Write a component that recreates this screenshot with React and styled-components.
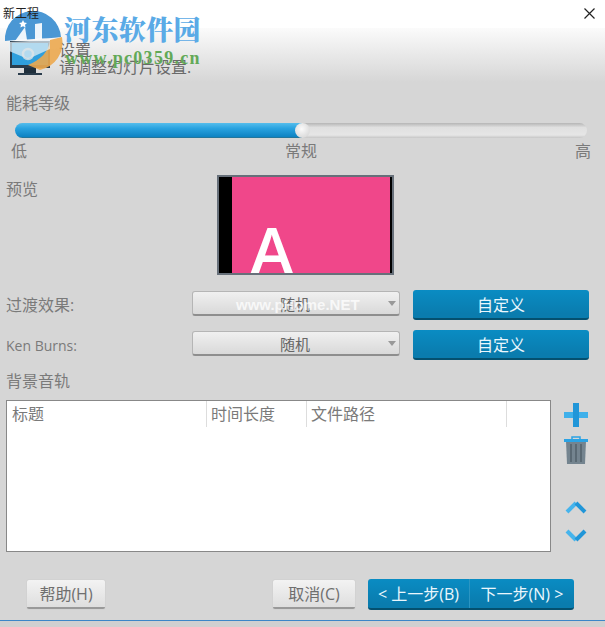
import React from 'react';
import styled, { createGlobalStyle } from 'styled-components';

const GlobalStyle = createGlobalStyle`
  html, body {
    margin: 0;
    padding: 0;
    background: #d6d6d6;
  }
  body {
    font-family: "Open Sans", "Noto Sans CJK SC", sans-serif;
    color: #757575;
  }
  * {
    box-sizing: border-box;
  }
`;

const Window = styled.div`
  position: relative;
  width: 605px;
  height: 627px;
  overflow: hidden;
  background: #d6d6d6;
  display: flex;
  flex-direction: column;
`;
const TitleBar = styled.div`
  height: 28px;
  flex: none;
  background: #fff;
  display: flex;
  justify-content: space-between;
  padding: 5px 10px 0 3px;
  font-size: 12px;
  line-height: 17px;
  color: #222;
`;
const WindowTitle = styled.span`
  position: relative;
  z-index: 2;
`;
const Header = styled.div`
  height: 54px;
  flex: none;
  background: linear-gradient(#fbfbfb, #d6d6d6);
  display: flex;
  padding: 14px 0 0 10px;
  gap: 9px;
`;
const HeaderText = styled.div`
  font-size: 16px;
  line-height: 17px;
  color: #6a6a6a;
`;
const Body = styled.div`
  flex: 1;
  display: flex;
  flex-direction: column;
  padding: 0 6px;
`;
const SectionLabel = styled.div`
  font-size: 16px;
  line-height: 22px;
  height: 22px;
  color: #7a7a7a;
`;
const EnergyLabel = styled(SectionLabel)`
  margin-top: 10px;
`;
const SliderTrack = styled.div`
  position: relative;
  margin: 9px 12px 0 9px;
  height: 15px;
  border-radius: 8px;
  background: linear-gradient(#b5b5b5, #e0e0e0 30%, #e6e6e6 80%, #c6c6c6);
`;
const SliderFill = styled.div`
  height: 100%;
  border-radius: 8px 0 0 8px;
  background: linear-gradient(#55bdec, #2aa3e0 35%, #0f84c4 90%, #2f6f86);
`;
const SliderThumb = styled.div`
  position: absolute;
  top: 0;
  width: 15px;
  height: 15px;
  margin-left: -7px;
  border-radius: 50%;
  background: radial-gradient(circle at 45% 40%, #fafafa, #dcdcdc 70%, #a0a0a0);
`;
const SliderTicks = styled.div`
  display: flex;
  justify-content: space-between;
  padding: 0 8px 0 5px;
  height: 22px;
  margin-top: 2px;
  font-size: 16px;
  line-height: 22px;
  color: #7a7a7a;
`;
const PreviewRow = styled.div`
  display: grid;
  grid-template-columns: 211px 177px;
  height: 102px;
  margin-top: 13px;
`;
const PreviewLabel = styled(SectionLabel)`
  margin-top: 3px;
`;
const PreviewFrame = styled.div`
  height: 100px;
  border: 2px solid #67707a;
  background: #f0478a;
  display: flex;
  justify-content: space-between;
  overflow: hidden;
`;
const BlackBar = styled.div`
  width: ${(props) => props.$w}px;
  background: #000;
  flex: none;
`;
const SlideLetter = styled.div`
  font-family: "Open Sans", "Liberation Sans", sans-serif;
  font-weight: 600;
  font-size: 66px;
  line-height: 66px;
  color: #fff;
  margin: 39px 0 0 18px;
  flex: 1;
`;
const OptionRow = styled.div`
  display: grid;
  grid-template-columns: 186px 208px 189px;
  height: 30px;
  margin-top: ${(props) => props.$top}px;
`;
const OptionLabel = styled.div`
  font-size: ${(props) => props.$size}px;
  color: #7a7a7a;
  line-height: 31px;
`;
const Select = styled.div`
  position: relative;
  height: 25px;
  margin-top: 1px;
  border-radius: 3px;
  border: 1px solid #b5b5b5;
  border-bottom: 2px solid #8e8e8e;
  background: linear-gradient(#f0f0f0, #d9d9d9);
  font-size: 15px;
  line-height: 24px;
  text-align: center;
  color: #666;
  padding-right: 2px;
`;
const SelectArrow = styled.span`
  position: absolute;
  right: 3px;
  top: 9px;
  border-left: 4px solid transparent;
  border-right: 4px solid transparent;
  border-top: 5px solid #999;
`;
const BlueButton = styled.div`
  margin-left: 13px;
  height: 30px;
  border-radius: 3px;
  background: linear-gradient(#0a8cc3, #0a7cae 85%);
  border-bottom: 2px solid #04506f;
  color: #eaf7fd;
  font-size: 16px;
  line-height: 30px;
  text-align: center;
`;
const TrackLabel = styled(SectionLabel)`
  margin-top: 10px;
`;
const TrackRow = styled.div`
  display: flex;
  margin-top: 8px;
  height: 152px;
`;
const Table = styled.div`
  width: 545px;
  height: 152px;
  background: #fff;
  border: 1px solid #888;
`;
const TableHead = styled.div`
  display: grid;
  grid-template-columns: 200px 100px 200px;
  height: 25px;
`;
const HeadCell = styled.div`
  padding-left: ${(props) => props.$pad}px;
  font-size: 16px;
  line-height: 26px;
  color: #7a7a7a;
  border-right: 1px solid #ddd;
`;
const SideIcons = styled.div`
  display: flex;
  flex-direction: column;
  align-items: center;
  width: 24px;
  margin-left: 13px;
`;
const IconBox = styled.svg`
  display: block;
  flex: none;
  margin-top: ${(props) => props.$top || 0}px;
`;
const Footer = styled.div`
  display: flex;
  align-items: flex-start;
  height: 41px;
  margin-top: 27px;
  padding-left: 21px;
`;
const GreyButton = styled.div`
  width: ${(props) => props.$w}px;
  margin-left: ${(props) => props.$left || 0}px;
  height: 29px;
  margin-top: 1px;
  border-radius: 2px;
  background: linear-gradient(#f3f3f3, #dedede);
  border-bottom: 2px solid #999;
  box-shadow: 0 0 1px #aaa;
  font-size: 16px;
  line-height: 28px;
  text-align: center;
  color: #6f6f6f;
`;
const NavGroup = styled.div`
  display: flex;
  width: 206px;
  height: 31px;
  margin-left: 13px;
  border-radius: 3px;
  overflow: hidden;
  background: linear-gradient(#0a8cc3, #0a7cae 85%);
  border-bottom: 2px solid #04506f;
  color: #eaf7fd;
  font-size: 16px;
  line-height: 30px;
`;
const NavPart = styled.div`
  width: ${(props) => props.$w}px;
  text-align: center;
  white-space: nowrap;
  border-right: ${(props) => (props.$split ? '1px solid #2b95c2' : 'none')};
`;
const BottomLine = styled.div`
  height: 1px;
  flex: none;
  background: #3b86c8;
`;
const BottomStrip = styled.div`
  height: 6px;
  flex: none;
  background: #d0d0d0;
`;

/* watermarks that lie over the page */
const LogoMark = styled.svg`
  position: absolute;
  left: 0;
  top: 8px;
`;
const BrandName = styled.div`
  position: absolute;
  left: 64px;
  top: 11px;
  font-family: "Noto Serif CJK SC", "Noto Sans CJK SC", serif;
  font-weight: 900;
  font-size: 27px;
  line-height: 36px;
  letter-spacing: 0.4px;
  white-space: nowrap;
  color: #5aaae6;
`;
const BrandUrl = styled.div`
  position: absolute;
  left: 65px;
  top: 48px;
  font-family: "Liberation Serif", serif;
  font-weight: 700;
  font-size: 18px;
  line-height: 20px;
  letter-spacing: 1.3px;
  color: #62a957;
  white-space: nowrap;
`;
const StampText = styled.div`
  position: absolute;
  left: 236px;
  top: 295px;
  font-family: "Liberation Sans", sans-serif;
  font-weight: 700;
  font-size: 15px;
  line-height: 20px;
  color: rgba(255, 255, 255, 0.75);
  white-space: nowrap;
`;

function MonitorIcon() {
  return (
    <IconBox width="40" height="36" viewBox="0 0 40 36" $top={-1}>
      <rect x="0" y="0" width="40" height="27" fill="#2a3c4b" />
      <rect x="2" y="2" width="36" height="22" fill="#2f9fdc" />
      <rect x="14" y="27" width="12" height="5" fill="#1f2f3c" />
      <rect x="8" y="32" width="24" height="2" fill="#2a3c4b" />
    </IconBox>
  );
}

function Logo() {
  return (
    <LogoMark width="70" height="72" viewBox="0 0 70 72">
      <path d="M5 33 A28 28 0 0 1 61 29 C44 31 24 31 5 33Z" fill="#4a97d4" />
      <path d="M15 33 L25 19 L27 32Z" fill="#fff" opacity="0.9" />
      <path d="M35 16 L42 15 L42 31 L35 32Z" fill="#fff" opacity="0.9" />
      <path d="M62 29 A28 28 0 0 1 40 62 L28 57 C40 52 49 44 50 32 Z" fill="#eca84f" opacity="0.9" />
      <path d="M9 34 L50 32 L50 41 L28 51 L9 43Z" fill="#e6f1f6" opacity="0.72" />
      <circle cx="28" cy="46" r="5" fill="none" stroke="#dfe3e6" strokeWidth="2.5" opacity="0.8" />
      <path d="M23 12 l1.2 2.6 2.8 0.3 -2 1.9 0.6 2.8 -2.6 -1.4 -2.6 1.4 0.6 -2.8 -2 -1.9 2.8 -0.3z" fill="#fff" />
    </LogoMark>
  );
}

function App() {
  return (
    <Window>
      <GlobalStyle />
      <TitleBar>
        <WindowTitle>新工程</WindowTitle>
        <IconBox width="11" height="11" viewBox="0 0 11 11" $top={3}>
          <path d="M0.5 0.5 L10.5 10.5 M10.5 0.5 L0.5 10.5" stroke="#222" strokeWidth="1.2" />
        </IconBox>
      </TitleBar>
      <Header>
        <MonitorIcon />
        <HeaderText>
          <div>设置</div>
          <div>请调整幻灯片设置.</div>
        </HeaderText>
      </Header>
      <Body>
        <EnergyLabel>能耗等级</EnergyLabel>
        <SliderTrack>
          <SliderFill style={{ width: '50.2%' }} />
          <SliderThumb style={{ left: '50.2%' }} />
        </SliderTrack>
        <SliderTicks>
          <span>低</span>
          <span>常规</span>
          <span>高</span>
        </SliderTicks>
        <PreviewRow>
          <PreviewLabel>预览</PreviewLabel>
          <PreviewFrame>
            <BlackBar $w={13} />
            <SlideLetter>A</SlideLetter>
            <BlackBar $w={2} />
          </PreviewFrame>
        </PreviewRow>
        <OptionRow $top={13}>
          <OptionLabel $size={16}>过渡效果:</OptionLabel>
          <Select>随机<SelectArrow /></Select>
          <BlueButton>自定义</BlueButton>
        </OptionRow>
        <OptionRow $top={10}>
          <OptionLabel $size={14}>Ken Burns:</OptionLabel>
          <Select>随机<SelectArrow /></Select>
          <BlueButton>自定义</BlueButton>
        </OptionRow>
        <TrackLabel>背景音轨</TrackLabel>
        <TrackRow>
          <Table>
            <TableHead>
              <HeadCell $pad={5}>标题</HeadCell>
              <HeadCell $pad={4}>时间长度</HeadCell>
              <HeadCell $pad={4}>文件路径</HeadCell>
            </TableHead>
          </Table>
          <SideIcons>
            <IconBox width="24" height="24" viewBox="0 0 24 24" $top={3}>
              <path d="M0 9 H24 V15 H0Z" fill="#3fb0ea" />
              <path d="M9 0 H15 V24 H9Z" fill="#2196d8" />
            </IconBox>
            <IconBox width="24" height="28" viewBox="0 0 24 28" $top={9}>
              <path d="M2 5 H22 L21 28 H3Z" fill="#74848f" />
              <path d="M7 8 V26 M12 8 V26 M17 8 V26" stroke="#5a6973" strokeWidth="2" />
              <rect x="0" y="3" width="24" height="3" fill="#2ba3e4" />
              <path d="M8 3 V1 H16 V3" fill="none" stroke="#2ba3e4" strokeWidth="1.5" />
            </IconBox>
            <IconBox width="22" height="14" viewBox="0 0 22 14" $top={36}>
              <path d="M2 12 L11 3" fill="none" stroke="#46b4ec" strokeWidth="4" />
              <path d="M11 3 L20 12" fill="none" stroke="#2196d8" strokeWidth="4" />
            </IconBox>
            <IconBox width="22" height="14" viewBox="0 0 22 14" $top={15}>
              <path d="M2 2 L11 11" fill="none" stroke="#46b4ec" strokeWidth="4" />
              <path d="M11 11 L20 2" fill="none" stroke="#2196d8" strokeWidth="4" />
            </IconBox>
          </SideIcons>
        </TrackRow>
        <Footer>
          <GreyButton $w={78}>帮助(H)</GreyButton>
          <GreyButton $w={82} $left={168}>取消(C)</GreyButton>
          <NavGroup>
            <NavPart $w={102} $split>&lt; 上一步(B)</NavPart>
            <NavPart $w={104}>下一步(N) &gt;</NavPart>
          </NavGroup>
        </Footer>
      </Body>
      <BottomLine />
      <BottomStrip />
      <Logo />
      <BrandName>河东软件园</BrandName>
      <BrandUrl>www.pc0359.cn</BrandUrl>
      <StampText>www.pHome.NET</StampText>
    </Window>
  );
}

export default App;
